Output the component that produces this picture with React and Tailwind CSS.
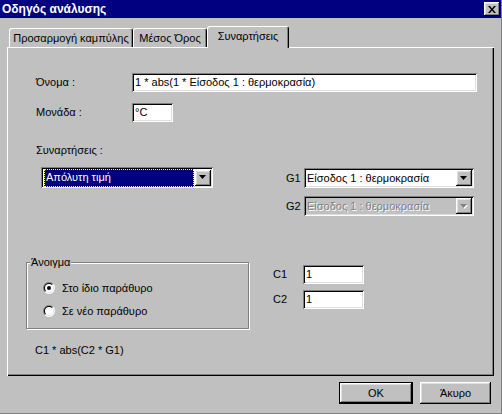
import React from 'react';

const font = { fontFamily: '"Liberation Sans", Arial, sans-serif' };

const sunken =
  'bg-white shadow-[inset_1px_1px_#808080,inset_-1px_-1px_#ffffff,inset_2px_2px_#000000,inset_-2px_-2px_#dfdfdf]';
const raised =
  'bg-[#c0c0c0] shadow-[inset_-1px_-1px_#000000,inset_1px_1px_#ffffff,inset_-2px_-2px_#808080,inset_2px_2px_#dfdfdf]';

function Arrow({ disabled }) {
  return (
    <div className={`flex h-[16px] w-[16px] shrink-0 items-center justify-center ${raised}`}>
      <svg width="8" height="5" viewBox="0 0 8 5">
        {disabled && <path d="M1 1h7l-3.5 4z" fill="#ffffff" />}
        <path d="M0 0h7L3.5 4z" fill={disabled ? '#808080' : '#000000'} />
      </svg>
    </div>
  );
}

function Combo({ value, width, height, focused, disabled }) {
  return (
    <div
      className={`flex items-center pl-[3px] pr-[2px] ${width} ${height} ${
        disabled
          ? 'bg-[#c0c0c0] shadow-[inset_1px_1px_#808080,inset_-1px_-1px_#ffffff,inset_2px_2px_#000000,inset_-2px_-2px_#dfdfdf]'
          : sunken
      }`}
    >
      {focused ? (
        <div className="mr-[1px] flex h-[18px] flex-1 items-center border border-dotted border-[#ffff80] bg-[#000080] px-[1px] text-white">
          {value}
        </div>
      ) : (
        <div
          className={`flex-1 ${disabled ? 'text-[#808080] [text-shadow:1px_1px_#ffffff]' : 'text-black'}`}
        >
          {value}
        </div>
      )}
      <Arrow disabled={disabled} />
    </div>
  );
}

function Radio({ checked, label }) {
  return (
    <div className="flex h-[12px] items-center gap-[7px]">
      <svg width="12" height="12" viewBox="0 0 12 12">
        <path d="M1.757 10.243A6 6 0 0 1 10.243 1.757Z" fill="#808080" />
        <path d="M10.243 1.757A6 6 0 0 1 1.757 10.243Z" fill="#ffffff" />
        <path d="M2.464 9.536A5 5 0 0 1 9.536 2.464Z" fill="#000000" />
        <path d="M9.536 2.464A5 5 0 0 1 2.464 9.536Z" fill="#dfdfdf" />
        <circle cx="6" cy="6" r="4" fill="#ffffff" />
        {checked && <circle cx="6" cy="6" r="2" fill="#000000" />}
      </svg>
      <span>{label}</span>
    </div>
  );
}

function Tab({ label, selected, width }) {
  return (
    <div
      className={`flex items-center justify-center rounded-tl-[3px] rounded-tr-[3px] border-l border-t border-white bg-[#c0c0c0] shadow-[inset_-1px_0_#808080] border-r border-r-black ${width} ${
        selected ? 'relative z-10 -mb-px h-[22px] pb-[2px]' : 'h-[19px]'
      }`}
    >
      {label}
    </div>
  );
}

export default function App() {
  return (
    <div
      className="flex h-[414px] w-[502px] flex-col border-b border-r border-[#808080] bg-[#c0c0c0] text-[11px] text-black"
      style={font}
    >
      <div className="flex h-[18px] shrink-0 items-center justify-between bg-[#000080] pl-[2px] pr-[1px]">
        <span className="text-[12px] font-bold text-white">Οδηγός ανάλυσης</span>
        <div className={`flex h-[14px] w-[16px] items-center justify-center ${raised}`}>
          <svg width="8" height="7" viewBox="0 0 8 7">
            <path d="M0 0h2l2 2.5L6 0h2L5 3.5 8 7H6L4 4.5 2 7H0l3-3.5z" fill="#000000" />
          </svg>
        </div>
      </div>

      <div className="mt-[8px] flex items-end pl-[9px]">
        <Tab label="Προσαρμογή καμπύλης" width="w-[124px]" />
        <Tab label="Μέσος Όρος" width="w-[74px]" />
        <Tab label="Συναρτήσεις" width="w-[82px]" selected />
      </div>

      <div className="ml-[7px] flex h-[329px] w-[487px] flex-col border-l border-t border-white pl-[18px] pt-[25px] shadow-[inset_-1px_-1px_#000000,inset_-2px_-2px_#808080]">
        <div className="flex h-[19px] items-center">
          <span className="ml-[10px] w-[96px]">Όνομα :</span>
          <div className={`flex h-[19px] w-[345px] items-center px-[3px] ${sunken}`}>
            1 * abs(1 * Είσοδος 1 : θερμοκρασία)
          </div>
        </div>

        <div className="mt-[11px] flex h-[19px] items-center">
          <span className="ml-[10px] w-[96px]">Μονάδα :</span>
          <div className={`flex h-[19px] w-[41px] items-center px-[3px] ${sunken}`}>°C</div>
        </div>

        <div className="ml-[10px] mt-[20px] h-[16px] leading-[16px]">Συναρτήσεις :</div>

        <div className="mt-[9px] flex">
          <div className="w-[260px] pl-[15px]">
            <Combo value="Απόλυτη τιμή" width="w-[172px]" height="h-[21px]" focused />
          </div>
          <div className="mt-[1px] flex flex-col gap-[8px]">
            <div className="flex items-center">
              <span className="w-[18px]">G1</span>
              <Combo value="Είσοδος 1 : θερμοκρασία" width="w-[170px]" height="h-[20px]" />
            </div>
            <div className="flex items-center">
              <span className="w-[18px]">G2</span>
              <Combo value="Είσοδος 1 : θερμοκρασία" width="w-[170px]" height="h-[20px]" disabled />
            </div>
          </div>
        </div>

        <div className="mt-[46px] flex">
          <div className="relative h-[67px] w-[223px] border border-[#808080] shadow-[1px_1px_#ffffff,inset_1px_1px_#ffffff]">
            <span className="absolute left-[3px] top-[-7px] bg-[#c0c0c0] px-[1px] leading-[13px]">
              Άνοιγμα
            </span>
            <div className="flex flex-col gap-[11px] pl-[16px] pt-[19px]">
              <Radio checked label="Στο ίδιο παράθυρο" />
              <Radio label="Σε νέο παράθυρο" />
            </div>
          </div>
          <div className="ml-[24px] mt-[3px] flex flex-col gap-[6px]">
            <div className="flex items-center">
              <span className="w-[30px]">C1</span>
              <div className={`flex h-[19px] w-[61px] items-center px-[3px] ${sunken}`}>1</div>
            </div>
            <div className="flex items-center">
              <span className="w-[30px]">C2</span>
              <div className={`flex h-[19px] w-[61px] items-center px-[3px] ${sunken}`}>1</div>
            </div>
          </div>
        </div>

        <div className="ml-[9px] mt-[14px] h-[14px] leading-[14px]">C1 * abs(C2 * G1)</div>
      </div>

      <div className="mt-[6px] flex justify-end gap-[7px] pr-[10px]">
        <div className={`flex h-[22px] w-[74px] items-center justify-center border border-black ${raised}`}>
          OK
        </div>
        <div className={`flex h-[22px] w-[71px] items-center justify-center ${raised}`}>Άκυρο</div>
      </div>
    </div>
  );
}
